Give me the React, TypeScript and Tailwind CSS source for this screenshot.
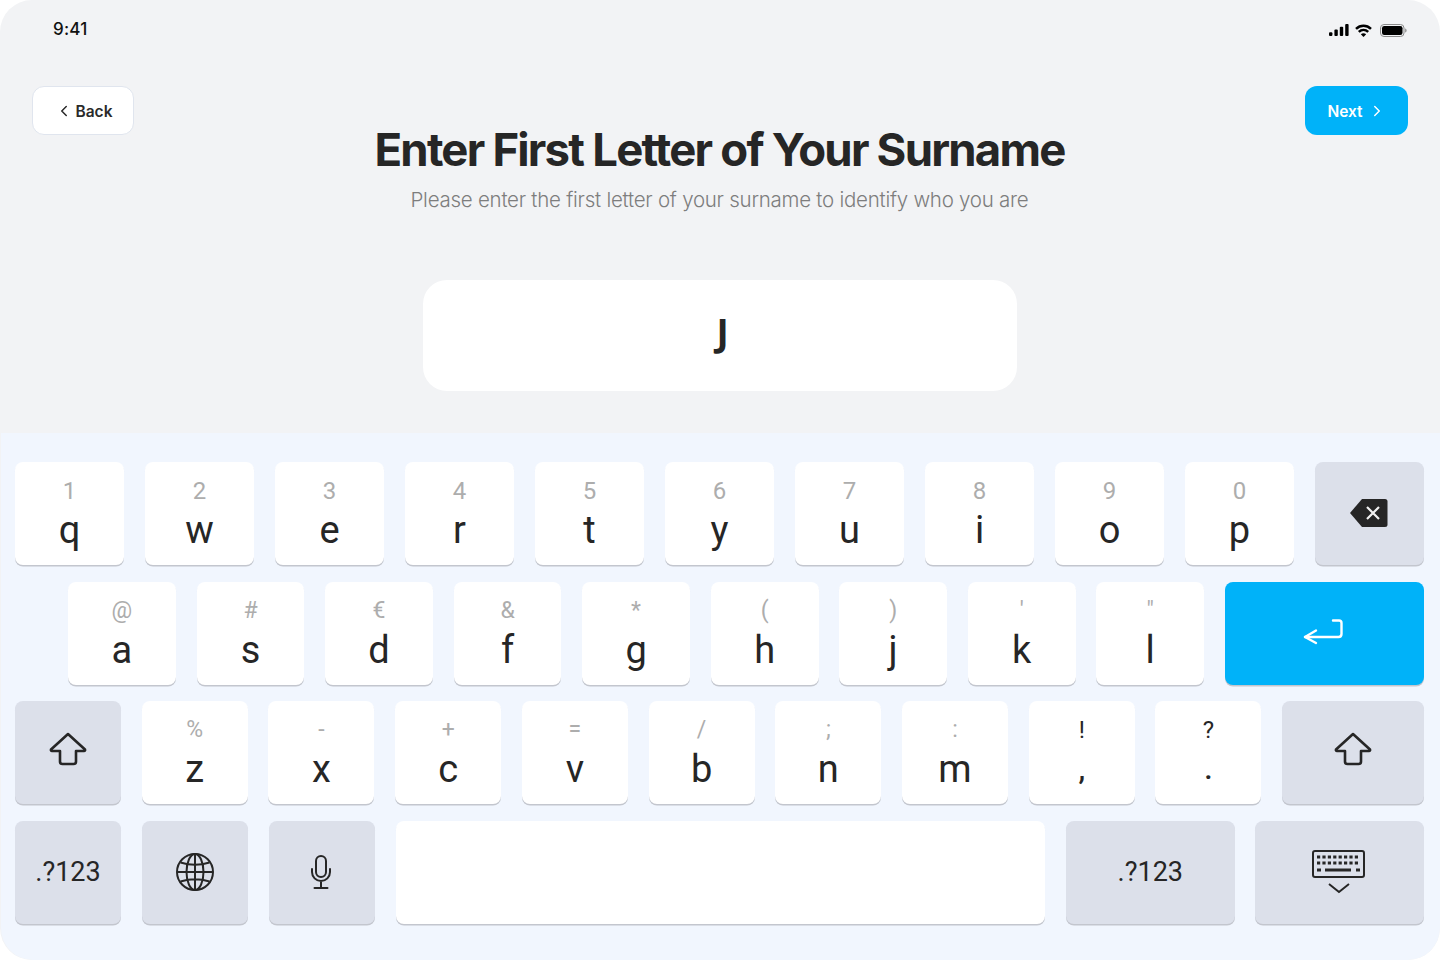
import React from "react";
import { ChevronLeft, ChevronRight } from "lucide-react";

const INK = "#262626";

function Key({ top, main, width, topDark, mainSmall, topLarge }: { top: string; main: string; width: string; topDark?: boolean; mainSmall?: boolean; topLarge?: boolean }) {
  return (
    <div className={`${width} h-[103px] shrink-0 rounded-lg bg-white shadow-[0_1.5px_0_#c3c6ce] flex flex-col items-center pt-[17px] font-['Roboto',sans-serif]`}>
      <div className={`h-6 leading-6 ${topDark ? "text-[24px] text-[#262626]" : topLarge ? "text-[24px] text-[#adadad]" : "text-[23px] text-[#adadad]"}`}>{top}</div>
      <div className={`mt-[5px] leading-[44px] text-[#262626] ${mainSmall ? "text-[30px] font-medium" : "text-[38px]"}`}>{main}</div>
    </div>
  );
}

function FnKey({ width, children }: { width: string; children: React.ReactNode }) {
  return (
    <div className={`${width} h-[103px] rounded-lg bg-[#dce0ea] shadow-[0_1.5px_0_#c3c6ce] flex items-center justify-center font-['Roboto',sans-serif] text-[27px] text-[#262626]`}>
      {children}
    </div>
  );
}

function ShiftIcon() {
  return (
    <svg width="38" height="34" viewBox="0 0 38 34" fill="none" stroke={INK} strokeWidth="2.6" strokeLinejoin="round" className="mb-[7px]">
      <path d="M19 2 L36 17.5 Q36.4 19 35 19 H27 V29.5 Q27 32 24.5 32 H13.5 Q11 32 11 29.5 V19 H3 Q1.6 19 2 17.5 Z" />
    </svg>
  );
}

export default function App() {
  const row1: [string, string][] = [["1","q"],["2","w"],["3","e"],["4","r"],["5","t"],["6","y"],["7","u"],["8","i"],["9","o"],["0","p"]];
  const row2: [string, string][] = [["@","a"],["#","s"],["€","d"],["&","f"],["*","g"],["(","h"],[")","j"],["′","k"],["″","l"]];
  const row3: [string, string][] = [["%","z"],["-","x"],["+","c"],["=","v"],["/","b"],[";","n"],[":","m"]];
  return (
    <div className="w-[1440px] h-[960px] bg-white">
      <div className="w-full h-full rounded-[32px] overflow-hidden bg-[#f2f3f5] flex flex-col font-['Inter',sans-serif]">
        <div className="h-[60px] shrink-0 pl-[53px] pr-[33px] flex items-center justify-between">
          <span className="text-[17px] font-medium text-[#111] tracking-[0.25px]">9:41</span>
          <div className="flex items-center gap-[6px]">
            <svg width="20" height="12" viewBox="0 0 20 12" fill="#000">
              <rect x="0" y="8.2" width="3.4" height="3.8" rx="1" />
              <rect x="5.4" y="5.6" width="3.4" height="6.4" rx="1" />
              <rect x="10.8" y="2.8" width="3.4" height="9.2" rx="1" />
              <rect x="16.2" y="0" width="3.4" height="12" rx="1" />
            </svg>
            <svg width="17" height="13" viewBox="0 0 17 13" fill="none" stroke="#000" strokeWidth="2.5" className="mr-[2px]">
              <path d="M1 4.9 C5.3 0.8 11.7 0.8 16 4.9" />
              <path d="M3.8 7.9 C6.5 5.4 10.5 5.4 13.2 7.9" />
              <path d="M8.5 13 L5.8 10.2 C7.4 9 9.6 9 11.2 10.2 Z" fill="#000" stroke="none" />
            </svg>
            <svg width="27" height="13" viewBox="0 0 27 13" fill="none">
              <rect x="0.5" y="0.5" width="23.5" height="12" rx="3.5" stroke="#8a8a8a" />
              <rect x="2" y="2" width="20.5" height="9" rx="2.2" fill="#000" />
              <path d="M25.2 4.5 C27 5 27 8 25.2 8.5 Z" fill="#8a8a8a" />
            </svg>
          </div>
        </div>

        <div className="grid grid-cols-[102px_1fr_103px] pl-[32px] pr-[32px] pt-[26px]">
          <div className="h-[49px] rounded-xl bg-white border border-[#e0e5ee] flex items-center justify-center gap-[3px] pl-px text-[15.5px] font-semibold text-[#2a2a2a] self-start">
            <ChevronLeft size={18} strokeWidth={2} />
            <span className="pt-[3px]">Back</span>
          </div>
          <div className="flex flex-col items-center pt-[34px]">
            <h1 className="text-[45.5px] leading-[60px] font-bold text-[#262626] tracking-[-1.78px] whitespace-nowrap">Enter First Letter of Your Surname</h1>
            <p className="mt-[5px] text-[20.5px] leading-[30px] font-light text-[#7d7d7d] tracking-[-0.25px] whitespace-nowrap">Please enter the first letter of your surname to identify who you are</p>
          </div>
          <div className="h-[49px] rounded-xl bg-[#00b2f9] flex items-center justify-center gap-[5px] text-[15.5px] font-semibold text-white self-start">
            <span className="pt-[3px]">Next</span>
            <ChevronRight size={18} strokeWidth={2} />
          </div>
        </div>

        <div className="mx-auto mt-[65px] w-[594px] h-[111px] rounded-[24px] bg-white flex items-center justify-center pb-[8px] pl-[5px] font-['Noto_Sans',sans-serif] text-[37px] font-bold text-[#262626]">
          J
        </div>

        <div className="mt-[42px] ml-px flex-1 bg-[#f1f6fe] rounded-b-[32px] pt-[29px] pl-[14px] pr-[16px] flex flex-col gap-[16.5px]">
          <div className="flex gap-[21px]">
            {row1.map(([t, m]) => <Key key={m} top={t} main={m} width="w-[109px]" topLarge />)}
            <FnKey width="flex-1">
              <svg width="38" height="28" viewBox="0 0 38 28" className="mr-[2px] mb-[1px]">
                <path d="M12 0 H35 Q37.5 0 37.5 2.5 V25.5 Q37.5 28 35 28 H12 L0 14 Z" fill={INK} />
                <path d="M17 8 L29 20 M29 8 L17 20" stroke="#f1f1f1" strokeWidth="2.2" fill="none" />
              </svg>
            </FnKey>
          </div>
          <div className="flex gap-[20.65px] pl-[53px]">
            {row2.map(([t, m]) => <Key key={m} top={t} main={m} width="w-[107.9px]" />)}
            <div className="flex-1 h-[103px] rounded-lg bg-[#00b2f9] shadow-[0_1.5px_0_#c3c6ce] flex items-center justify-center">
              <svg width="40" height="26" viewBox="0 0 40 26" fill="none" stroke="#fff" strokeWidth="2.4" strokeLinecap="round" strokeLinejoin="round" className="mb-[2px] mr-[2px]">
                <path d="M30 1.5 H36 Q38.5 1.5 38.5 4 V15 Q38.5 18 35.5 18 H2" />
                <path d="M13 11.5 L2 18 L13 24" />
              </svg>
            </div>
          </div>
          <div className="flex gap-[20.72px]">
            <FnKey width="w-[106px]"><ShiftIcon /></FnKey>
            {row3.map(([t, m]) => <Key key={m} top={t} main={m} width="w-[106px]" />)}
            <Key top="!" main="," width="w-[106px]" topDark mainSmall />
            <Key top="?" main="." width="w-[106px]" topDark mainSmall />
            <FnKey width="flex-1"><ShiftIcon /></FnKey>
          </div>
          <div className="flex gap-[20.9px]">
            <FnKey width="w-[106px]">.?123</FnKey>
            <FnKey width="w-[106px]">
              <svg width="38" height="38" viewBox="0 0 38 38" fill="none" stroke={INK} strokeWidth="2">
                <circle cx="19" cy="19" r="18" />
                <ellipse cx="19" cy="19" rx="8.5" ry="18" />
                <path d="M19 1 V37 M1 19 H37 M4.5 9.5 Q19 14 33.5 9.5 M4.5 28.5 Q19 24 33.5 28.5" />
              </svg>
            </FnKey>
            <FnKey width="w-[106px]">
              <svg width="20" height="34" viewBox="0 0 20 34" fill="none" stroke={INK} strokeWidth="2" strokeLinecap="round" className="mr-[2px]">
                <rect x="5" y="1" width="10" height="21" rx="5" />
                <path d="M1 14 V17 A9 9 0 0 0 19 17 V14 M10 26 V33 M3.5 33 H16.5" />
              </svg>
            </FnKey>
            <div className="w-[649.5px] h-[103px] rounded-lg bg-white shadow-[0_1.5px_0_#c3c6ce]" />
            <FnKey width="w-[168.5px]">.?123</FnKey>
            <FnKey width="flex-1">
              <svg width="54" height="44" viewBox="0 0 54 44" fill="none" stroke={INK} className="mr-[1px]">
                <rect x="1" y="1" width="51" height="26" rx="2" strokeWidth="2" />
                <path d="M5 7 H48 M5 13 H48" strokeWidth="3.2" strokeDasharray="3.2 2.2" />
                <path d="M5 20 H9 M13 20 H39 M44 20 H48" strokeWidth="3.2" />
                <path d="M17 34 L27 42 L37 34" strokeWidth="2" />
              </svg>
            </FnKey>
          </div>
        </div>
      </div>
    </div>
  );
}
